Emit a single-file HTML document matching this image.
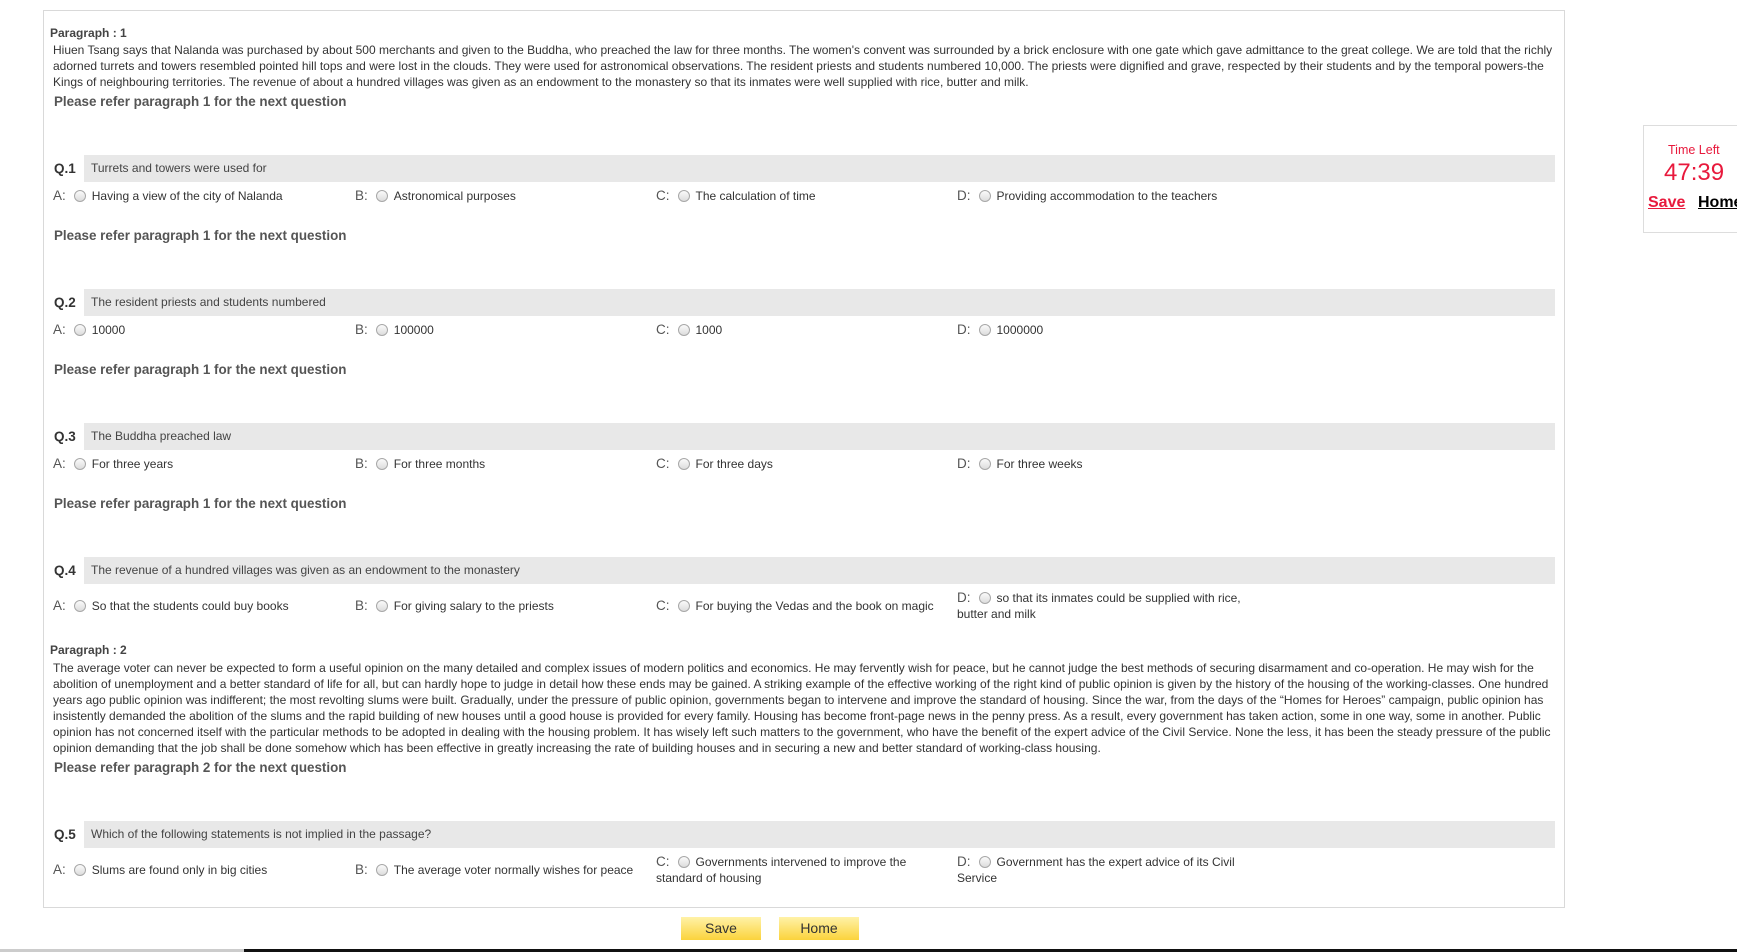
<!DOCTYPE html>
<html><head><meta charset="utf-8"><style>
*{margin:0;padding:0;box-sizing:border-box}
body{width:1737px;height:952px;position:relative;background:#fff;font-family:"Liberation Sans",Arial,sans-serif;color:#333;overflow:hidden}
.box{position:absolute;left:43px;top:10px;width:1522px;height:898px;border:1px solid #d9d9d9}
.a{position:absolute;white-space:nowrap}
.ph{font-size:12px;font-weight:bold;color:#444;line-height:16px}
.pt{font-size:12px;line-height:16px;color:#333}
.rf{font-size:13.4px;font-weight:bold;color:#555;line-height:16px}
.bar{position:absolute;left:84px;width:1471px;height:27px;background:#e8e8e8;font-size:12px;line-height:27px;padding-left:7px;color:#444}
.ql{position:absolute;left:54px;font-size:13.5px;font-weight:bold;color:#333;line-height:27px}
.op{position:absolute;font-size:12px;line-height:16px;color:#333;white-space:nowrap}
.op .l{font-size:13.5px;color:#555;margin-right:8px}
.r{display:inline-block;width:12px;height:12px;border-radius:50%;border:1px solid #a8a8a8;background:linear-gradient(#fafafa,#dcdcdc);vertical-align:-2px;margin-right:6px}
.btn{position:absolute;top:917px;width:80px;height:23px;background:linear-gradient(#fff2a8,#fbd33c);font-size:14px;text-align:center;line-height:23px;color:#333}
</style></head><body>
<div class="box"></div>
<div class="a ph" style="left:50px;top:25px">Paragraph : 1</div>
<div class="a pt" style="left:53px;top:42px">Hiuen Tsang says that Nalanda was purchased by about 500 merchants and given to the Buddha, who preached the law for three months. The women's convent was surrounded by a brick enclosure with one gate which gave admittance to the great college. We are told that the richly<br>adorned turrets and towers resembled pointed hill tops and were lost in the clouds. They were used for astronomical observations. The resident priests and students numbered 10,000. The priests were dignified and grave, respected by their students and by the temporal powers-the<br>Kings of neighbouring territories. The revenue of about a hundred villages was given as an endowment to the monastery so that its inmates were well supplied with rice, butter and milk.</div>
<div class="a rf" style="left:54px;top:94px">Please refer paragraph 1 for the next question</div>

<div class="ql" style="top:155px">Q.1</div><div class="bar" style="top:155px">Turrets and towers were used for</div>
<div class="op" style="left:53px;top:188px"><span class="l">A:</span><span class="r"></span>Having a view of the city of Nalanda</div>
<div class="op" style="left:355px;top:188px"><span class="l">B:</span><span class="r"></span>Astronomical purposes</div>
<div class="op" style="left:656px;top:188px"><span class="l">C:</span><span class="r"></span>The calculation of time</div>
<div class="op" style="left:957px;top:188px"><span class="l">D:</span><span class="r"></span>Providing accommodation to the teachers</div>
<div class="a rf" style="left:54px;top:228px">Please refer paragraph 1 for the next question</div>

<div class="ql" style="top:289px">Q.2</div><div class="bar" style="top:289px">The resident priests and students numbered</div>
<div class="op" style="left:53px;top:322px"><span class="l">A:</span><span class="r"></span>10000</div>
<div class="op" style="left:355px;top:322px"><span class="l">B:</span><span class="r"></span>100000</div>
<div class="op" style="left:656px;top:322px"><span class="l">C:</span><span class="r"></span>1000</div>
<div class="op" style="left:957px;top:322px"><span class="l">D:</span><span class="r"></span>1000000</div>
<div class="a rf" style="left:54px;top:362px">Please refer paragraph 1 for the next question</div>

<div class="ql" style="top:423px">Q.3</div><div class="bar" style="top:423px">The Buddha preached law</div>
<div class="op" style="left:53px;top:456px"><span class="l">A:</span><span class="r"></span>For three years</div>
<div class="op" style="left:355px;top:456px"><span class="l">B:</span><span class="r"></span>For three months</div>
<div class="op" style="left:656px;top:456px"><span class="l">C:</span><span class="r"></span>For three days</div>
<div class="op" style="left:957px;top:456px"><span class="l">D:</span><span class="r"></span>For three weeks</div>
<div class="a rf" style="left:54px;top:496px">Please refer paragraph 1 for the next question</div>

<div class="ql" style="top:557px">Q.4</div><div class="bar" style="top:557px">The revenue of a hundred villages was given as an endowment to the monastery</div>
<div class="op" style="left:53px;top:598px"><span class="l">A:</span><span class="r"></span>So that the students could buy books</div>
<div class="op" style="left:355px;top:598px"><span class="l">B:</span><span class="r"></span>For giving salary to the priests</div>
<div class="op" style="left:656px;top:598px"><span class="l">C:</span><span class="r"></span>For buying the Vedas and the book on magic</div>
<div class="op" style="left:957px;top:590px"><span class="l">D:</span><span class="r"></span>so that its inmates could be supplied with rice,<br>butter and milk</div>

<div class="a ph" style="left:50px;top:642px">Paragraph : 2</div>
<div class="a pt" style="left:53px;top:660px">The average voter can never be expected to form a useful opinion on the many detailed and complex issues of modern politics and economics. He may fervently wish for peace, but he cannot judge the best methods of securing disarmament and co-operation. He may wish for the<br>abolition of unemployment and a better standard of life for all, but can hardly hope to judge in detail how these ends may be gained. A striking example of the effective working of the right kind of public opinion is given by the history of the housing of the working-classes. One hundred<br>years ago public opinion was indifferent; the most revolting slums were built. Gradually, under the pressure of public opinion, governments began to intervene and improve the standard of housing. Since the war, from the days of the “Homes for Heroes” campaign, public opinion has<br>insistently demanded the abolition of the slums and the rapid building of new houses until a good house is provided for every family. Housing has become front-page news in the penny press. As a result, every government has taken action, some in one way, some in another. Public<br>opinion has not concerned itself with the particular methods to be adopted in dealing with the housing problem. It has wisely left such matters to the government, who have the benefit of the expert advice of the Civil Service. None the less, it has been the steady pressure of the public<br>opinion demanding that the job shall be done somehow which has been effective in greatly increasing the rate of building houses and in securing a new and better standard of working-class housing.</div>
<div class="a rf" style="left:54px;top:760px">Please refer paragraph 2 for the next question</div>

<div class="ql" style="top:821px">Q.5</div><div class="bar" style="top:821px">Which of the following statements is not implied in the passage?</div>
<div class="op" style="left:53px;top:862px"><span class="l">A:</span><span class="r"></span>Slums are found only in big cities</div>
<div class="op" style="left:355px;top:862px"><span class="l">B:</span><span class="r"></span>The average voter normally wishes for peace</div>
<div class="op" style="left:656px;top:854px"><span class="l">C:</span><span class="r"></span>Governments intervened to improve the<br>standard of housing</div>
<div class="op" style="left:957px;top:854px"><span class="l">D:</span><span class="r"></span>Government has the expert advice of its Civil<br>Service</div>

<div class="btn" style="left:681px">Save</div>
<div class="btn" style="left:779px">Home</div>

<div style="position:absolute;left:1643px;top:125px;width:110px;height:108px;border:1px solid #ddd"></div>
<div class="a" style="left:1668px;top:143px;font-size:12.5px;color:#e8193c">Time Left</div>
<div class="a" style="left:1664px;top:159px;font-size:24px;color:#e8193c">47:39</div>
<div class="a" style="left:1648px;top:194px;font-size:16px;font-weight:bold;color:#e8193c;text-decoration:underline">Save</div>
<div class="a" style="left:1698px;top:194px;font-size:16px;font-weight:bold;color:#000;text-decoration:underline">Home</div>

<div style="position:absolute;left:0;top:949px;width:244px;height:3px;background:#ccc"></div>
<div style="position:absolute;left:244px;top:949px;width:1493px;height:3px;background:#111"></div>
</body></html>
